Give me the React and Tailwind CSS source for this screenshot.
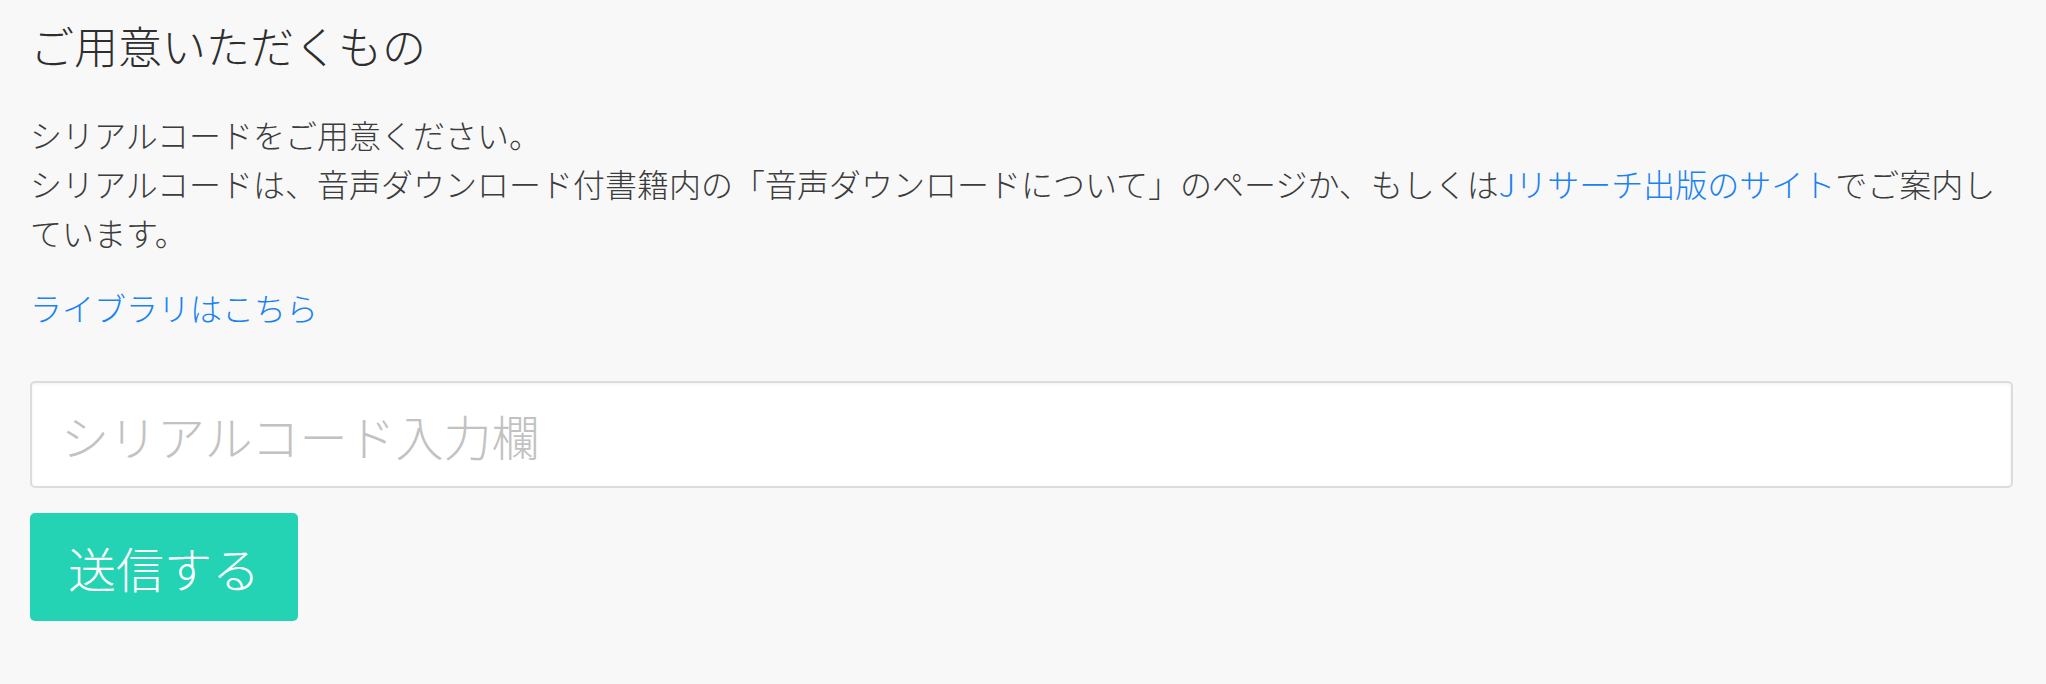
import React from 'react';

const font = { fontFamily: '"Noto Sans CJK JP", "Noto Sans", sans-serif' };

const App = () => {
    return (
        <div className="min-h-screen w-full bg-[#f8f8f8] pl-[30px] pr-[33px] pt-[15px] text-[#3c3c3c] font-light" style={font}>
            <h2 className="text-[44px] leading-[60px] text-[#2e2e2e] font-light">ご用意いただくもの</h2>

            <p className="mt-[35px] text-[32px] leading-[49px]">
                シリアルコードをご用意ください。
                <br />
                シリアルコードは、音声ダウンロード付書籍内の「音声ダウンロードについて」のページか、もしくは
                <a href="#" className="text-[#1a82f2]">Jリサーチ出版のサイト</a>
                でご案内しています。
            </p>

            <p className="mt-[26px] text-[32px] leading-[49px]">
                <a href="#" className="text-[#1a82f2]">ライブラリはこちら</a>
            </p>

            <form className="mt-[49px]" onSubmit={(e) => e.preventDefault()}>
                <input
                    type="text"
                    placeholder="シリアルコード入力欄"
                    className="block w-full h-[107px] bg-white border-2 border-[#dcdcdc] rounded-[5px] px-[29px] text-[48px] font-light text-[#444] placeholder:text-[#c2c2c2] shadow-[inset_0_1px_3px_rgba(0,0,0,0.06)] outline-none"
                    style={font}
                />
                <button
                    type="submit"
                    className="mt-[25px] block w-[268px] h-[108px] bg-[#24d2b4] rounded-[5px] text-white text-[48px] font-light"
                    style={font}
                >
                    送信する
                </button>
            </form>
        </div>
    );
};

export default App;
